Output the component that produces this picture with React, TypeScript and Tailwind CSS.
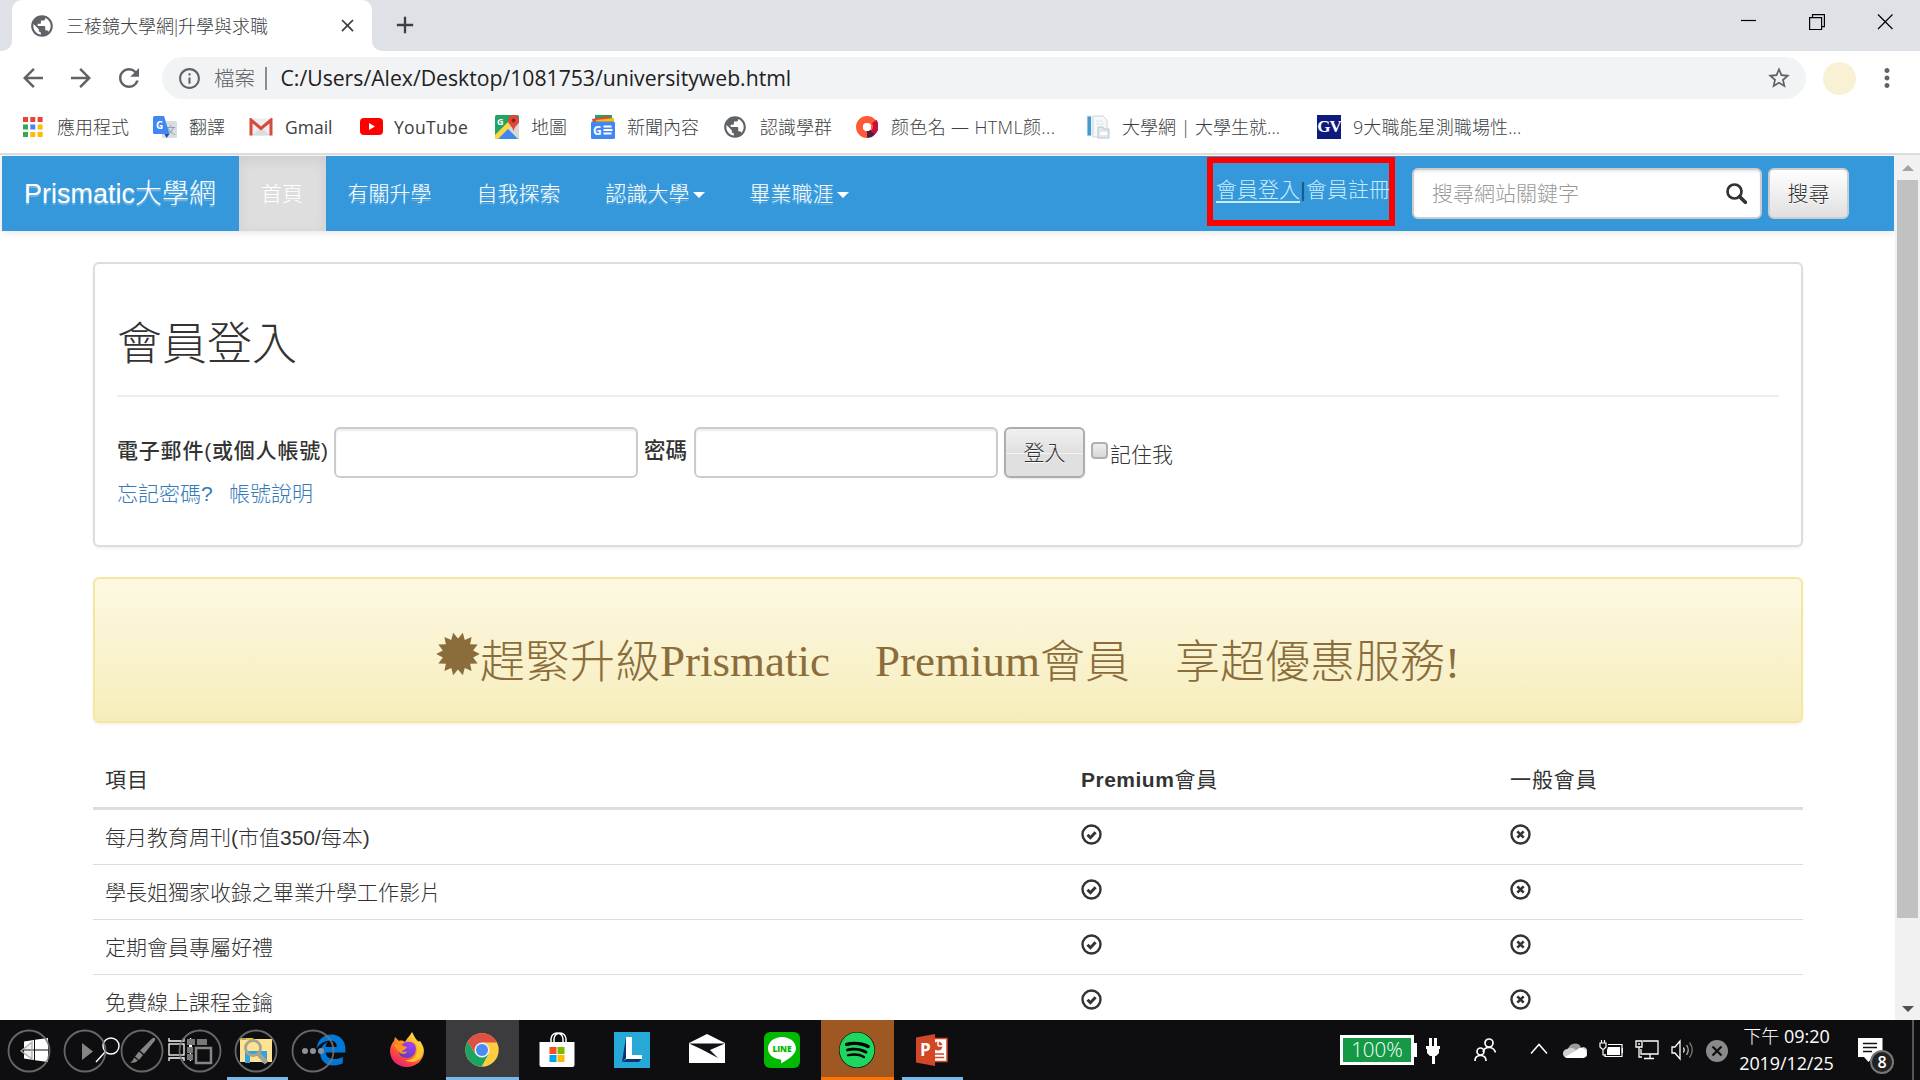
import React from "react";
import { MdArrowBack, MdArrowForward, MdRefresh, MdInfoOutline, MdStarBorder, MdMoreVert, MdPublic, MdClose, MdAdd } from "react-icons/md";
import { FaEdgeLegacy, FaSpotify } from "react-icons/fa6";

/* ---------- bookmark icons ---------- */

const AppsIcon = () => {
  const colors = ["#ea4335", "#ea4335", "#ea4335", "#34a853", "#4285f4", "#fbbc05", "#34a853", "#fbbc05", "#fbbc05"];
  return (
    <svg viewBox="0 0 20 20" className="h-5 w-5">
      {colors.map((c, i) => (
        <rect key={i} x={(i % 3) * 7.3} y={Math.floor(i / 3) * 7.5} width="5" height="5" fill={c} />
      ))}
    </svg>
  );
};

const TranslateIcon = () => (
  <svg viewBox="0 0 24 24" className="h-6 w-6">
    <rect x="9" y="6" width="15" height="17" rx="1.5" fill="#dadce0" />
    <text x="12.5" y="18.5" fontSize="10" fill="#607d8b" fontFamily="Noto Sans CJK TC, sans-serif">文</text>
    <path d="M1.5 1H11l5.5 18H1.5Q0 19 0 17.500V2.500Q0 1 1.500 1Z" fill="#4285f4" />
    <path d="M11.500 19H16.500L13.500 23Z" fill="#1a4fb4" />
    <text x="3" y="13.500" fontSize="10" fontWeight="700" fill="#fff" fontFamily="Open Sans, sans-serif">G</text>
  </svg>
);

const GmailIcon = () => (
  <svg viewBox="0 0 24 18" className="h-[18px] w-6">
    <rect x="1" y="0.5" width="22" height="17" rx="1.500" fill="#eeeeee" />
    <path d="M3 17.500 12 9.500 21 17.500Z" fill="#dcdcdc" />
    <path d="M2 17.500V2L12 10.500 22 2V17.500" fill="none" stroke="#d54b3d" strokeWidth="3" />
  </svg>
);

const YoutubeIcon = () => (
  <svg viewBox="0 0 23 17" className="h-[17px] w-[23px]">
    <rect width="23" height="17" rx="4" fill="#f00" />
    <path d="M9 5v7l6-3.500Z" fill="#fff" />
  </svg>
);

const MapsIcon = () => (
  <svg viewBox="0 0 24 24" className="h-6 w-6">
    <rect width="24" height="24" rx="1.500" fill="#1fa463" />
    <path d="M24 8v15l-1 1L12 13Z" fill="#d9d9d9" />
    <path d="M3 24 13 14 22 24Z" fill="#4285f4" />
    <path d="M0 20 14 6l3 4L3 24H0Z" fill="#ffd54a" />
    <path d="M18.500 0C15 0 13 2.500 13 5.500c0 4 4.500 5 5.500 11C19.500 10.500 24 9.500 24 5.500 24 2.500 22 0 18.500 0Z" fill="#e2453a" />
    <circle cx="18.500" cy="5.500" r="2" fill="#7f2a20" />
    <text x="2" y="9.500" fontSize="9" fontWeight="700" fill="#fff" fontFamily="Open Sans, sans-serif">G</text>
  </svg>
);

const NewsIcon = () => (
  <svg viewBox="0 0 24 24" className="h-6 w-6">
    <path d="M4 0h17v8H4Z" fill="#1fa463" />
    <path d="M1 4 18 1l3 7H2Z" fill="#ea4335" />
    <path d="M5 5 23 3v5H5Z" fill="#fbbc05" />
    <rect y="6.500" width="24" height="17.500" rx="1.500" fill="#4285f4" />
    <text x="2" y="19.500" fontSize="12" fontWeight="700" fill="#fff" fontFamily="Open Sans, sans-serif">G</text>
    <path d="M12.500 11.500h8M12.500 15h9M12.500 18.500h8" stroke="#fff" strokeWidth="1.800" />
  </svg>
);

const RingIcon = () => (
  <svg viewBox="0 0 22 22" className="h-[22px] w-[22px]">
    <circle cx="11" cy="11" r="7.500" fill="none" stroke="#ff5a36" strokeWidth="7" />
    <path d="M18.200 5.500A8 8 0 0 1 17 16.500" fill="none" stroke="#c8103f" strokeWidth="5.500" />
    <path d="M16.500 16A7.500 7.500 0 0 1 11 18.500" fill="none" stroke="#501b46" strokeWidth="6.500" />
    <circle cx="11" cy="11" r="4" fill="#fff" />
  </svg>
);

const PageIcon = () => (
  <svg viewBox="0 0 24 24" className="h-6 w-6">
    <rect x="0.500" y="0.500" width="6" height="21" fill="#e3eef5" />
    <rect x="1.500" y="1.500" width="3.500" height="19" fill="#4699d0" />
    <path d="M7 1h10l4 4v17H7Z" fill="#f5f7f8" stroke="#ccd6dc" />
    <path d="M10 6h7M10 9h8" stroke="#dfe6ea" />
    <path d="M12 12h5l1 2h5v9H12Z" fill="#dfe7ed" stroke="#b9c6cf" />
    <rect x="14" y="17" width="7" height="3" fill="#fff" />
  </svg>
);

const GvIcon = () => (
  <span className="flex h-6 w-6 items-center justify-center bg-[#0d1b7d] font-['Liberation_Serif',serif] text-[17px] leading-6 font-bold tracking-[-1px] text-white">GV</span>
);

const GlobeIcon = () => <MdPublic className="h-[26px] w-[26px] text-[#5f6368]" />;

/* ---------- page icons ---------- */

const starPoints = Array.from({ length: 28 }, (_, i) => {
  const r = i % 2 === 0 ? 21.800 : 15.500;
  const a = (Math.PI * (i + 1)) / 14;
  return `${(22 + r * Math.sin(a)).toFixed(2)},${(22 - r * Math.cos(a)).toFixed(2)}`;
}).join(" ");

const Certificate = () => (
  <svg viewBox="0 0 44 44" className="mt-[-19px] h-11 w-11">
    <polygon points={starPoints} fill="#8a6d3b" />
  </svg>
);

const OkCircle = () => (
  <svg viewBox="0 0 21 21" className="h-[21px] w-[21px]">
    <circle cx="10.500" cy="10.500" r="9" fill="none" stroke="#333" strokeWidth="2.400" />
    <path d="m6.500 10.800 2.900 2.900 5.200-5.400" fill="none" stroke="#333" strokeWidth="3" />
  </svg>
);

const RemoveCircle = () => (
  <svg viewBox="0 0 21 21" className="h-[21px] w-[21px]">
    <circle cx="10.500" cy="10.500" r="9" fill="none" stroke="#333" strokeWidth="2.400" />
    <path d="m7.300 7.300 6.400 6.400m0-6.400-6.400 6.400" fill="none" stroke="#333" strokeWidth="2.600" />
  </svg>
);

const SearchGlyph = () => (
  <svg viewBox="0 0 21 21" className="h-[21px] w-[21px]">
    <circle cx="8.500" cy="8.500" r="7" fill="none" stroke="#333" strokeWidth="2.700" />
    <path d="m13.500 13.500 5.800 5.800" stroke="#333" strokeWidth="3.700" strokeLinecap="round" />
  </svg>
);

const Caret = () => <span className="ml-[3px] inline-block border-x-[6px] border-t-[6px] border-x-transparent border-t-white align-middle" />;

/* ---------- taskbar icons ---------- */

const WindowsLogo = () => (
  <svg viewBox="0 0 24 24" className="h-6 w-6" fill="#fff">
    <path d="M0 3.400 10 2v9.400H0ZM11 1.800 24 0v11.400H11ZM0 12.400h10V22L0 20.600ZM11 12.400h13V24l-13-1.800Z" />
  </svg>
);

const SearchThin = () => (
  <svg viewBox="0 0 26 26" className="h-[26px] w-[26px]" fill="none" stroke="#fff" strokeWidth="1.400">
    <circle cx="16" cy="9" r="8" />
    <path d="M10.300 14.700 1 25" />
  </svg>
);

const TaskViewIcon = () => (
  <svg viewBox="0 0 26 26" className="h-[26px] w-[26px]" fill="none" stroke="#fff" strokeWidth="1.300">
    <rect x="1" y="7" width="15" height="11" />
    <path d="M1 1v3h15V1M1 24v-3h15v3M22.500 1v5M22.500 12v12" />
    <rect x="21" y="7" width="3" height="3" fill="#fff" stroke="none" />
  </svg>
);

const ExplorerIcon = () => (
  <svg viewBox="0 0 32 28" className="h-7 w-8">
    <path d="M0 2h13l2 3H0Z" fill="#f5c431" />
    <path d="M0 4h12l2-1h18v23H0Z" fill="#ffe393" />
    <path d="M2 3h4" stroke="#2795cf" />
    <path d="M5 27V15h22v12h-5v-7H10v7Z" fill="#2fa4e0" />
  </svg>
);

const FirefoxIcon = () => (
  <svg viewBox="0 0 36 36" className="h-9 w-9">
    <defs>
      <linearGradient id="ff" x1="0.800" y1="0" x2="0.200" y2="1">
        <stop offset="0" stopColor="#fff44f" />
        <stop offset="0.400" stopColor="#ff9a1e" />
        <stop offset="0.700" stopColor="#ff4b3a" />
        <stop offset="1" stopColor="#e31587" />
      </linearGradient>
      <radialGradient id="ffp" cx="0.700" cy="0.200" r="0.900">
        <stop offset="0" stopColor="#a640f5" />
        <stop offset="1" stopColor="#5a3fc4" />
      </radialGradient>
    </defs>
    <path d="M18 35C8 35 1 28 1 19c0-4 2-8 4-10l1-4 4 4c2-1 5 0 6 1 2-4 5-6 7-10 2 4 4 7 5 10l3-1c2 3 4 6 4 10 0 9-8 16-17 16Z" fill="url(#ff)" />
    <path d="M12 14c3-5 11-6 14-1 3 6-2 13-8 13-6 0-9-4-8-8Z" fill="url(#ffp)" />
    <path d="M5 13c5-2 8 1 13 2-1 3-5 3-5 5 2 0 4-1 5 0-2 3-6 2-8 0Z" fill="#ff9423" />
    <path d="M23 1c-2 7 7 10 5 18-1 7-7 10-13 9 10 5 19 0 19-10 0-8-8-9-11-17Z" fill="#ffcf35" opacity="0.850" />
  </svg>
);

const ChromeIcon = () => (
  <svg viewBox="0 0 34 34" className="h-[34px] w-[34px]">
    <circle cx="17" cy="17" r="16.700" fill="#ffcd42" />
    <path d="M17 9.500H32A16.700 16.700 0 0 0 2.500 8.700l8 12Z" fill="#de5246" />
    <path d="M2.500 8.700A16.700 16.700 0 0 0 16.500 33.700L23.500 21 17 24.500 10.500 21Z" fill="#1da462" />
    <circle cx="17" cy="17" r="7.500" fill="#f1f1f1" />
    <circle cx="17" cy="17" r="6" fill="#4a8af4" />
  </svg>
);

const StoreIcon = () => (
  <svg viewBox="0 0 36 36" className="h-9 w-9">
    <path d="M12 11V7a6 6 0 0 1 12 0v4M15 11V7a6 6 0 0 1 12 0v4" fill="none" stroke="#fff" strokeWidth="1.500" />
    <path d="M0.500 10h35v23q0 2-2 2h-31q-2 0-2-2Z" fill="#fff" />
    <rect x="10.500" y="15" width="7" height="7" fill="#f25022" />
    <rect x="18.500" y="15" width="7" height="7" fill="#7fba00" />
    <rect x="10.500" y="23" width="7" height="7" fill="#00a4ef" />
    <rect x="18.500" y="23" width="7" height="7" fill="#ffb900" />
  </svg>
);

const LIcon = () => (
  <svg viewBox="0 0 36 36" className="h-9 w-9">
    <rect width="36" height="36" fill="#27a9d8" />
    <path d="M12 5 8 30 13 27ZM8 30l4-4h16l-3 4Z" fill="#10306e" />
    <path d="M12 5h6v18h10v4H12Z" fill="#fff" />
  </svg>
);

const MailIcon = () => (
  <svg viewBox="0 0 36 30" className="h-[30px] w-9">
    <path d="M0 9 18 0l18 9v20H0Z" fill="#fff" />
    <path d="M0 9.500h36L21 16l8 8L12 15Z" fill="#111216" />
  </svg>
);

const LineIcon = () => (
  <svg viewBox="0 0 36 36" className="h-9 w-9">
    <rect width="36" height="36" rx="6" fill="#00b900" />
    <path d="M18 5C10 5 4 10 4 16.500c0 6 5 10 12.500 11 1 .5 1 2 .5 4C25 27 32 22 32 16.500 32 10 26 5 18 5Z" fill="#fff" />
    <text x="18" y="19.800" textAnchor="middle" fontSize="8.300" fontWeight="800" fill="#00b900" fontFamily="Open Sans, sans-serif">LINE</text>
  </svg>
);

const PowerpointIcon = () => (
  <svg viewBox="0 0 32 32" className="h-8 w-8">
    <rect x="14" y="4.500" width="17" height="23" fill="#fff" stroke="#d24726" strokeWidth="1.500" />
    <circle cx="22" cy="12" r="4.500" fill="#d24726" />
    <path d="M22 12V6M22 12h6" stroke="#fff" strokeWidth="1.500" />
    <path d="M19 20h9M19 23.500h9" stroke="#d24726" strokeWidth="1.500" />
    <path d="M0 3.500 19 0v32L0 28.500Z" fill="#d24726" />
    <text x="4" y="22" fontSize="17" fontWeight="700" fill="#fff" fontFamily="Open Sans, sans-serif">P</text>
  </svg>
);

const PlugIcon = () => (
  <svg viewBox="0 0 14 26" className="h-[26px] w-3.5" fill="#fff">
    <path d="M3 0h3v8H3ZM8 0h3v8H8ZM0 8h14v3h-1v4l-3 3H9v8H6v-8H4l-3-3v-4H0Z" />
  </svg>
);

const PeopleIcon = () => (
  <svg viewBox="0 0 22 24" className="h-6 w-[22px]" fill="none" stroke="#fff" strokeWidth="1.700">
    <circle cx="15" cy="5" r="4" />
    <path d="M9 14q1-4.500 6-4.500t6.500 5" />
    <circle cx="6.500" cy="13.500" r="3.500" />
    <path d="M1 23q0-5.500 5.500-5.500T12 23" />
  </svg>
);

const CloudIcon = () => (
  <svg viewBox="0 0 24 18" className="h-[18px] w-6">
    <path d="M5 9a7 7 0 0 1 13-3l-7 8Z" fill="#9a9a9a" />
    <path d="M4 8q5-3 9 1l7-3a5 5 0 0 1-1 11H5A4.500 4.500 0 0 1 4 8Z" fill="#d0d0d0" />
    <path d="M2 16 14 9q3-4 7-1c3 1 4 8-1 9H5q-2 0-3-1Z" fill="#fff" />
  </svg>
);

const SmallBattery = () => (
  <svg viewBox="0 0 24 20" className="h-5 w-6" fill="none" stroke="#fff" strokeWidth="1.200">
    <path d="M1 3h6v4l-2 2H3L1 7ZM2.500 0v3M5.500 0v3M4 9v6h3" />
    <path d="M9 4.500h14v12H6V14" />
    <path d="M9 7h12v8H8V10Z" fill="#fff" stroke="none" />
    <path d="M23.500 8v5" strokeWidth="1.500" />
  </svg>
);

const NetworkIcon = () => (
  <svg viewBox="0 0 24 20" className="h-5 w-6" fill="none" stroke="#fff" strokeWidth="1.300">
    <path d="M8 1h15v13H6V9M15 14v4M9 18.500h10" />
    <path d="M1 1h6v6H1ZM4 7v10h3M3 4h2" />
  </svg>
);

const SpeakerIcon = () => (
  <svg viewBox="0 0 24 22" className="h-[22px] w-6" fill="none" stroke="#fff" strokeWidth="1.300">
    <path d="M1 8h3l5-6v18l-5-6H1Z" />
    <path d="M12.500 8.500q1.500 2.500 0 5" />
    <path d="M15.500 6q3.500 5 0 10" stroke="#aaa" />
    <path d="M18.500 3.500q5.500 7.500 0 15" stroke="#777" />
  </svg>
);

const NotifyIcon = () => (
  <svg viewBox="0 0 25 26" className="h-[26px] w-[25px]">
    <path d="M0 0h24.500v19H15l-4.500 5L6 19H0Z" fill="#fff" />
    <path d="M5 5.500h14M5 9.500h14M5 13.500h9" stroke="#111" strokeWidth="1.300" />
  </svg>
);

/* ---------- data ---------- */

const bookmarks: { icon: React.ReactNode; label: string; item: string; slot: string; text: string }[] = [
  { icon: <AppsIcon />, label: "應用程式", item: "w-[130px]", slot: "w-[34px]", text: "" },
  { icon: <TranslateIcon />, label: "翻譯", item: "w-[96px]", slot: "w-9", text: "" },
  { icon: <GmailIcon />, label: "Gmail", item: "w-[111px]", slot: "w-9", text: "font-normal text-[17.500px]" },
  { icon: <YoutubeIcon />, label: "YouTube", item: "w-[135px]", slot: "w-[34px]", text: "font-normal text-[17.500px] tracking-[0.3px]" },
  { icon: <MapsIcon />, label: "地圖", item: "w-24", slot: "w-9", text: "" },
  { icon: <NewsIcon />, label: "新聞內容", item: "w-[131px]", slot: "w-9", text: "" },
  { icon: <GlobeIcon />, label: "認識學群", item: "w-[134px]", slot: "w-[38px]", text: "" },
  { icon: <RingIcon />, label: "颜色名 — HTML颜...", item: "w-[230px]", slot: "w-[35px]", text: "tracking-[0.350px]" },
  { icon: <PageIcon />, label: "大學網 | 大學生就...", item: "w-[231px]", slot: "w-9", text: "" },
  { icon: <GvIcon />, label: "9大職能星測職場性...", item: "w-[230px]", slot: "w-9", text: "tracking-[0.1px]" },
];

const rows = ["每月教育周刊(市值350/每本)", "學長姐獨家收錄之畢業升學工作影片", "定期會員專屬好禮", "免費線上課程金鑰"];

/* ---------- sections ---------- */

const TabStrip = () => (
  <div className="flex h-[51px] justify-between bg-[#dee1e6]">
    <div className="flex">
      <div className="flex w-3 items-end bg-white"><div className="h-full w-full rounded-br-[10px] bg-[#dee1e6]" /></div>
      <div className="flex w-[360px] items-center rounded-t-[10px] bg-white pr-3.5 pl-[17px]">
        <MdPublic className="h-[26px] w-[26px] text-[#5f6368]" />
        <span className="ml-[11px] flex flex-1 text-[18px] leading-6 whitespace-nowrap text-[#3c4043]">
          <span>三稜鏡大學網</span>
          <span className="flex w-[4px] justify-center">|</span>
          <span>升學與求職</span>
        </span>
        <MdClose className="h-[21px] w-[21px] text-[#3c4043]" />
      </div>
      <div className="flex w-3 bg-white"><div className="h-full w-full rounded-bl-[10px] bg-[#dee1e6]" /></div>
      <MdAdd className="mt-[11px] ml-[7px] h-7 w-7 text-[#3c4043]" />
    </div>
    <svg viewBox="0 0 160 16" className="mt-[14px] mr-[26px] h-4 w-40" fill="none" stroke="#000" strokeWidth="1.200">
      <path d="M7 6.500h15" />
      <path d="M78.500 3.500V0.600h11.900v12h-3M75.600 3.600h12v11.900h-12Z" />
      <path d="m144 0.500 14.500 14.500m0-14.500L144 15" />
    </svg>
  </div>
);

const Toolbar = () => (
  <div className="flex h-[54px] items-center bg-white text-[#5f6368]">
    <MdArrowBack className="ml-[18px] h-[30px] w-[30px]" />
    <MdArrowForward className="ml-[18px] h-[30px] w-[30px]" />
    <MdRefresh className="ml-[18px] h-[30px] w-[30px]" />
    <div className="ml-[18px] flex h-[42px] w-[1644px] items-center rounded-full bg-[#f1f3f4] pr-3.5 pl-[15px]">
      <MdInfoOutline className="h-[25px] w-[25px]" />
      <span className="ml-3 text-[20.5px] leading-7">檔案</span>
      <span className="ml-2.5 h-[23px] w-[1.500px] bg-[#8a8d91]" />
      <span className="ml-3.5 flex-1 text-[21.2px] leading-7 font-normal whitespace-nowrap text-[#202124]">C:/Users/Alex/Desktop/1081753/universityweb.html</span>
      <MdStarBorder className="h-[26px] w-[26px]" />
    </div>
    <span className="ml-[17px] h-[33px] w-[33px] rounded-full bg-[#f9f1d3]" />
    <MdMoreVert className="ml-4 h-[30px] w-[30px]" />
  </div>
);

const Bookmarks = () => (
  <div className="flex h-[50px] items-center border-b-2 border-[#dadce0] bg-white pb-[5px] pl-[23px] text-[18px] leading-6 text-[#3c4043]">
    {bookmarks.map((b) => (
      <div key={b.label} className={`flex shrink-0 items-center whitespace-nowrap ${b.item}`}>
        <span className={`flex shrink-0 ${b.slot}`}>{b.icon}</span>
        <span className={b.text}>{b.label}</span>
      </div>
    ))}
  </div>
);

const Nav = () => (
  <nav className="flex h-[75px] w-[1892px] items-center bg-[#3498db] text-[21px] leading-[30px] text-white shadow-[0_1px_8px_rgba(0,0,0,0.12)]">
    <div className="w-[237px] pl-[22px] text-[27px] whitespace-nowrap [text-shadow:0_2px_1px_rgba(255,255,255,0.3)]">Prismatic大學網</div>
    <div className="flex h-full w-[87px] items-center justify-center bg-[#dedede] pr-px shadow-[inset_0_4px_13px_rgba(0,0,0,0.08)]">首頁</div>
    <div className="flex w-[881px] whitespace-nowrap [text-shadow:0_2px_1px_rgba(255,255,255,0.25)]">
      <span className="pr-[22.500px] pl-[21.500px]">有關升學</span>
      <span className="px-[22.500px]">自我探索</span>
      <span className="px-[22.500px]">認識大學<Caret /></span>
      <span className="px-[22.500px]">畢業職涯<Caret /></span>
    </div>
    <div className="mb-[5px] h-[69px] w-[188px] border-6 border-[#f00] pt-[12px] pl-[3px] text-[#c9edff]">
      <div className="flex w-[180px] whitespace-nowrap">
        <span className="underline decoration-[1.500px] underline-offset-[4px]">會員登入</span>
        <span className="w-[6px] text-center text-[#1c4f73]">|</span>
        <span>會員註冊</span>
      </div>
    </div>
    <div className="ml-[17px] flex h-[51px] w-[350px] items-center justify-between rounded-md border-2 border-[#ccc] bg-white pr-[13px] pl-[18px] text-[#999] shadow-[inset_0_2px_2px_rgba(0,0,0,0.08)]">
      <span>搜尋網站關鍵字</span>
      <SearchGlyph />
    </div>
    <button className="ml-1.5 h-[51px] w-[81px] rounded-md border-2 border-[#ccc] bg-gradient-to-b from-white to-[#e0e0e0] text-[#333] [text-shadow:0_1px_0_#fff]">搜尋</button>
  </nav>
);

const LoginPanel = () => (
  <section className="h-[285px] rounded-md border-2 border-[#ddd] bg-white px-[22px] shadow-[0_2px_3px_rgba(0,0,0,0.05)]">
    <h1 className="h-[133px] border-b-2 border-[#eee] pt-[53px] font-['Liberation_Serif','Noto_Sans_CJK_TC',serif] text-[45px] leading-[56px] font-light">會員登入</h1>
    <form className="mt-[30px] flex h-[51px] items-center text-[21px] leading-[30px] whitespace-nowrap">
      <label className="w-[217px] pb-1 text-[21px] font-medium tracking-[0.8px]">電子郵件(或個人帳號)</label>
      <input className="h-[51px] w-[304px] rounded-md border-2 border-[#ccc] shadow-[inset_0_2px_2px_rgba(0,0,0,0.08)]" />
      <label className="w-14 pb-1 pl-[6px] text-[21.500px] font-medium">密碼</label>
      <input className="h-[51px] w-[304px] rounded-md border-2 border-[#ccc] shadow-[inset_0_2px_2px_rgba(0,0,0,0.08)]" />
      <button className="ml-1.5 h-[51px] w-[81px] rounded-md border-2 border-[#adadad] bg-[linear-gradient(#f0f0f0_0,#e0e0e0_50%,#f4f4f4_50%,#f4f4f4_52%,#e0e0e0_54%)] text-[#333] shadow-[0_1px_2px_rgba(0,0,0,0.1)] [text-shadow:0_1px_0_#fff]">登入</button>
      <span className="mb-1 ml-1.5 h-[17px] w-[17px] rounded-[4px] border-2 border-[#b0b0b0] bg-gradient-to-b from-[#eee] to-[#d8d8d8]" />
      <span className="ml-[2px] pt-1">記住我</span>
    </form>
    <div className="mt-px flex gap-[18px] text-[21px] leading-[30px] text-[#337ab7]">
      <a className="w-[94px] whitespace-nowrap">忘記密碼?</a>
      <a>帳號說明</a>
    </div>
  </section>
);

const Promo = () => (
  <section className="mt-[30px] flex h-[146px] items-center justify-center rounded-md border-2 border-[#f5e79e] bg-gradient-to-b from-[#fcf8e3] to-[#f7edbb] pt-[26px] shadow-[0_2px_3px_rgba(0,0,0,0.05)]">
    <Certificate />
    <h2 className="font-['Liberation_Serif','Noto_Sans_CJK_TC',serif] text-[45px] leading-[60px] font-light whitespace-nowrap text-[#8a6d3b]">趕緊升級<span className="relative top-[-2px]">Prismatic　Premium</span>會員　享超優惠服務!</h2>
  </section>
);

const Table = () => (
  <section className="mt-[30px] text-[21px] leading-[30px] text-[#333]">
    <div className="flex h-[57px] items-center border-b-3 border-[#ddd] pl-3 font-normal tracking-[0.9px]">
      <span className="w-[976px]">項目</span>
      <span className="w-[429px]"><span className="font-bold tracking-[0.5px]">Premium</span>會員</span>
      <span>一般會員</span>
    </div>
    {rows.map((r) => (
      <div key={r} className="flex h-[55px] items-center border-b border-[#ddd] pl-3">
        <span className="w-[976px] pt-0.5">{r}</span>
        <span className="w-[429px] pb-[5px]"><OkCircle /></span>
        <span className="pb-[5px]"><RemoveCircle /></span>
      </div>
    ))}
  </section>
);

const Scrollbar = () => (
  <div className="flex h-full w-[25px] flex-col items-center bg-[#f1f1f1]">
    <span className="mt-[10px] h-0 w-0 border-x-[6px] border-b-[6px] border-x-transparent border-b-[#a3a3a3]" />
    <span className="mt-[9px] h-[738px] w-[21px] bg-[#c1c1c1]" />
    <span className="mt-[88px] h-0 w-0 border-x-[6px] border-t-[6px] border-x-transparent border-t-[#505050]" />
  </div>
);

const ringX = [29, 85, 142, 200, 256, 313];

/* Translucent slideshow controls floating over the left end of the taskbar. */
const SlideControls = () => (
  <svg viewBox="0 0 340 60" className="absolute top-0 left-0 h-[60px] w-[340px]">
    {ringX.map((x) => (
      <circle key={x} cx={x} cy="31" r="20.500" fill="none" stroke="#777" strokeWidth="1.800" opacity="0.850" />
    ))}
    <path d="M32 22v17L21 31Z" fill="#999" fillOpacity="0.150" stroke="#aaa" strokeWidth="1.300" />
    <path d="M82 23v17l11-8.500Z" fill="#858585" />
    <path d="M152 18.500q4-2 3 2l-11 13.500-4-3.500ZM139 31.500l4 3.500-4 5-4-3.500ZM134 37.500l4 3q-3 3-8 2 3-1 4-5Z" fill="#858585" />
    <path d="M187 19h8v6h-8ZM197 19h10v6H197ZM187 27h6v6h-6ZM187 34h6v6h-6Z" fill="#777" />
    <rect x="196" y="28" width="15" height="15" fill="none" stroke="#858585" strokeWidth="2.500" />
    <g fill="none" stroke="#a5a391" strokeWidth="2.800">
      <circle cx="253" cy="28" r="7.500" />
      <path d="m258.500 34 8 9" strokeWidth="4.500" />
    </g>
    <g fill="#8b9299">
      <circle cx="305" cy="31" r="3" /><circle cx="313" cy="31" r="3" /><circle cx="321" cy="31" r="3" />
    </g>
  </svg>
);

const Taskbar = () => (
  <footer className="relative flex h-[60px] bg-[#0e0e10] text-white">
    <div className="flex w-[72px] pt-[18px] pl-6"><WindowsLogo /></div>
    <div className="flex w-[72px] pt-[17px] pl-[23px]"><SearchThin /></div>
    <div className="flex w-[83px] pt-[17px] pl-6"><TaskViewIcon /></div>
    <div className="flex w-[61px] border-b-3 border-[#76b9ed] pt-4 pl-[13px]"><ExplorerIcon /></div>
    <div className="flex w-[86px] pt-[14px] pl-[27px]"><FaEdgeLegacy className="h-8 w-8 text-[#0078d7]" /></div>
    <div className="flex w-[72px] pt-3 pl-[15px]"><FirefoxIcon /></div>
    <div className="flex w-[73px] border-b-3 border-[#76b9ed] bg-[#3c3c3f] pt-[13px] pl-[19px]"><ChromeIcon /></div>
    <div className="flex w-[77px] pt-3 pl-5"><StoreIcon /></div>
    <div className="flex w-[73px] pt-3 pl-[18px]"><LIcon /></div>
    <div className="flex w-[76px] pt-[14px] pl-5"><MailIcon /></div>
    <div className="flex w-[76px] pt-3 pl-[19px]"><LineIcon /></div>
    <div className="flex w-[73px] border-b-3 border-[#ff7300] bg-[#a05822] pt-3 pl-[18px]">
      <span className="flex h-9 w-9 rounded-full bg-black"><FaSpotify className="h-9 w-9 text-[#1ed760]" /></span>
    </div>
    <div className="ml-2 flex w-[61px] border-b-3 border-[#76b9ed] pt-[14px] pl-[14px]"><PowerpointIcon /></div>
    <div className="ml-[377px] flex h-[30px] w-[74px] items-center justify-center self-center border-3 border-white bg-[#159947] pb-[3px] text-[20.500px] leading-6">100%</div>
    <span className="h-[14px] w-[3px] self-center bg-white" />
    <div className="flex w-[57px] pt-[18px] pl-[9px]"><PlugIcon /></div>
    <div className="flex w-[56px] pt-[18px]"><PeopleIcon /></div>
    <svg viewBox="0 0 18 12" className="mt-[23px] h-3 w-[18px]" fill="none" stroke="#fff" strokeWidth="1.500"><path d="m1 10.500 8-9 8 9" /></svg>
    <div className="flex w-[51px] pt-[21px] pl-[15px]"><CloudIcon /></div>
    <div className="flex w-9 pt-5"><SmallBattery /></div>
    <div className="flex w-[36px] pt-5"><NetworkIcon /></div>
    <div className="flex w-[35px] pt-[19px]"><SpeakerIcon /></div>
    <svg viewBox="0 0 22 22" className="mt-5 h-[22px] w-[22px]"><circle cx="11" cy="11" r="11" fill="#8a8a8a" /><path d="m6.500 6.500 9 9m0-9-9 9" stroke="#111" strokeWidth="2.300" /></svg>
    <div className="flex w-[117px] flex-col items-center pt-[3px] text-[18px] leading-[27px] whitespace-nowrap">
      <span>下午 <span className="font-normal">09:20</span></span>
      <span className="font-normal tracking-[-0.1px]">2019/12/25</span>
    </div>
    <div className="relative w-[67px] pt-[18px] pl-[13px]">
      <NotifyIcon />
      <span className="absolute top-[30px] left-[25px] flex h-6 w-6 items-center justify-center rounded-full border-2 border-[#777] bg-[#222] text-[16px] leading-5 font-semibold">8</span>
    </div>
    <span className="h-full w-[1.500px] bg-[#555]" />
    <SlideControls />
  </footer>
);

export default function App() {
  return (
    <div className="flex h-[1080px] w-[1920px] flex-col overflow-hidden bg-white font-['Open_Sans','Noto_Sans_CJK_TC',sans-serif] font-light">
      <TabStrip />
      <Toolbar />
      <Bookmarks />
      <div className="flex h-[865px] justify-between overflow-hidden">
        <main className="w-[1895px] bg-white pt-px pl-[2px] font-['Liberation_Sans','Noto_Sans_CJK_TC',sans-serif] text-[#333]">
          <Nav />
          <div className="mt-[31px] ml-[91px] w-[1710px]">
            <LoginPanel />
            <Promo />
            <Table />
          </div>
        </main>
        <Scrollbar />
      </div>
      <Taskbar />
    </div>
  );
}
